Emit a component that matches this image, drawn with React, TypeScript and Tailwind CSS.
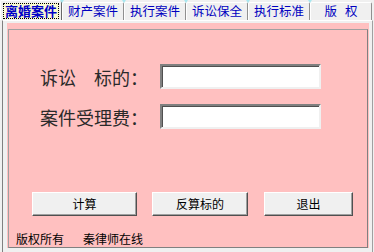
export default function App() {
  const tabs = ["财产案件", "执行案件", "诉讼保全", "执行标准"];
  const notchXs = [60, 122, 184, 246, 308];
  return (
    <div className="relative w-[374px] h-[252px] bg-[#f0f0f0] overflow-hidden font-['Noto_Sans_CJK_SC',sans-serif] select-none">
      {/* tab strip */}
      <div className="flex h-[20px] items-end">
        <div className="w-[62px] h-[20px] border-l border-t border-white border-r border-r-[#696969] rounded-t-[2px] flex items-center justify-center">
          <div className="w-[56px] h-[16px] border border-dotted border-black bg-[#fafad2] flex items-center justify-center text-[13px] leading-none font-bold text-[#0000c8]">
            离婚案件
          </div>
        </div>
        {tabs.map((t) => (
          <div
            key={t}
            className="w-[62px] h-[18px] border-l border-t border-white border-r border-r-[#909090] rounded-t-[2px] flex items-center justify-center text-[12.5px] leading-none text-[#0000c0]"
          >
            {t}
          </div>
        ))}
        <div className="w-[62px] h-[18px] border-l border-t border-white border-r border-r-[#909090] rounded-t-[2px] flex items-center justify-center gap-[8px] text-[12.5px] leading-none text-[#0000c0]">
          <span>版</span>
          <span>权</span>
        </div>
      </div>
      {notchXs.map((x) => (
        <svg key={x} className="absolute top-0" style={{ left: x }} width="4" height="3" viewBox="0 0 4 3">
          <polygon points="0,0 4,0 2,3" fill="#a8e8f0" />
        </svg>
      ))}
      {/* tab page */}
      <div className="ml-[2px] w-[371px] h-[232px] border-l border-l-[#808080] border-t border-t-white border-r border-r-[#a0a0a0]">
        <div className="ml-[4px] mt-[2px] w-[362px] h-[225px] bg-[#ffc0c0] pt-[6px]">
          <div className="ml-[1px] w-[360px] h-[219px] border border-[#a0a0a0] border-b-[#808080] border-r-[#808080] flex flex-col">
            <div className="mt-[34px] ml-[31px] flex items-center">
              <div className="w-[120px] text-[18px] leading-none text-[#2a2a2a]">诉讼　标的：</div>
              <div className="w-[161px] h-[25px] bg-white border-2 border-t-[#808080] border-l-[#808080] border-b-[#f0f0f0] border-r-[#f0f0f0] shadow-[inset_1px_1px_0_#505050]" />
            </div>
            <div className="mt-[15px] ml-[31px] flex items-center">
              <div className="w-[120px] text-[18px] leading-none text-[#2a2a2a]">案件受理费：</div>
              <div className="w-[161px] h-[25px] bg-white border-2 border-t-[#808080] border-l-[#808080] border-b-[#f0f0f0] border-r-[#f0f0f0] shadow-[inset_1px_1px_0_#505050]" />
            </div>
            <div className="mt-[63px] ml-[23px] flex">
              <button className="w-[105px] h-[24px] bg-[#f0f0f0] border border-t-white border-l-white border-b-[#505050] border-r-[#505050] shadow-[inset_-1px_-1px_0_#a0a0a0] text-[12px] leading-none text-black">
                计算
              </button>
              <button className="ml-[15px] w-[96px] h-[24px] bg-[#f0f0f0] border border-t-white border-l-white border-b-[#505050] border-r-[#505050] shadow-[inset_-1px_-1px_0_#a0a0a0] text-[12px] leading-none text-black">
                反算标的
              </button>
              <button className="ml-[16px] w-[89px] h-[24px] bg-[#f0f0f0] border border-t-white border-l-white border-b-[#505050] border-r-[#505050] shadow-[inset_-1px_-1px_0_#a0a0a0] text-[12px] leading-none text-black">
                退出
              </button>
            </div>
            <div className="mt-[17px] ml-[7px] flex gap-[19px] text-[12px] leading-none text-black">
              <span>版权所有</span>
              <span>秦律师在线</span>
            </div>
          </div>
        </div>
      </div>
    </div>
  );
}
